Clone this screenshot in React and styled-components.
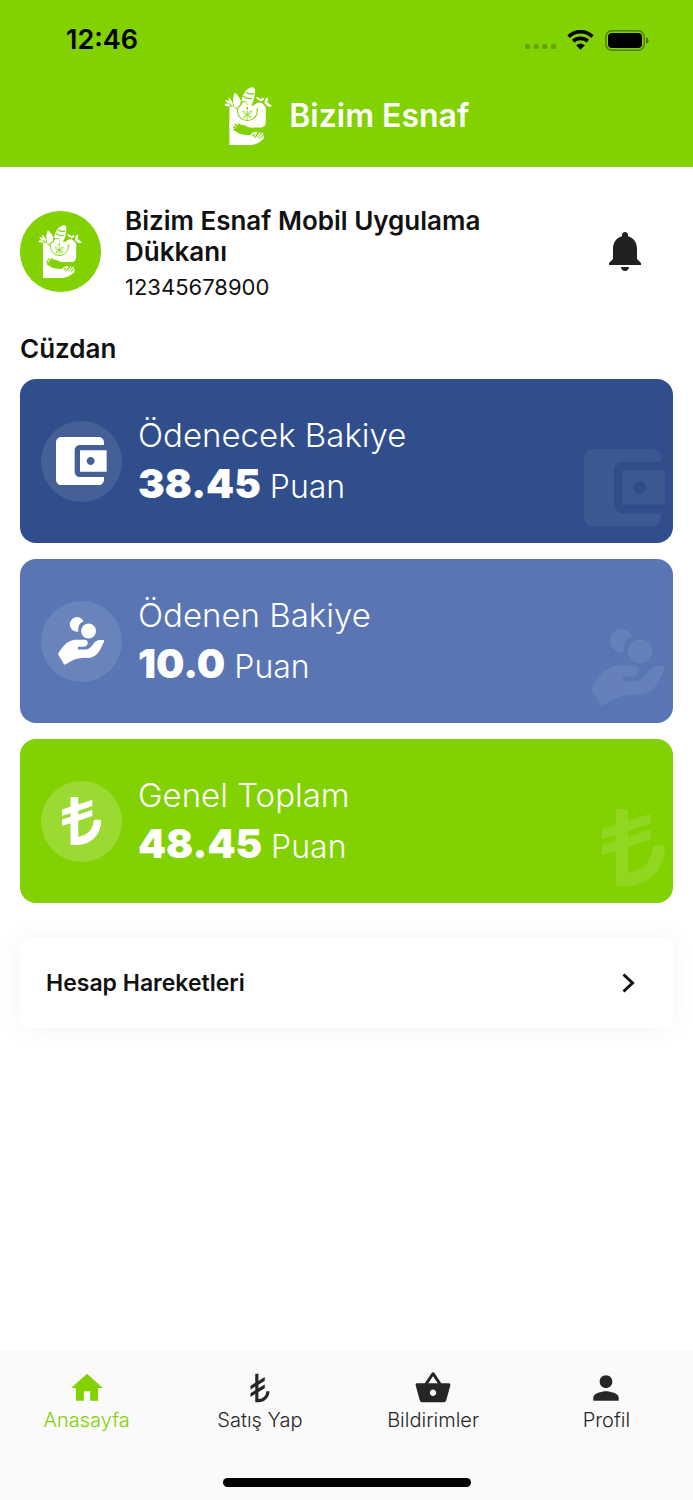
import React from "react";
import styled, { createGlobalStyle, css } from "styled-components";

const GREEN = "#82d100";
const INK = "#111111";

const GlobalStyle = createGlobalStyle`
  * { box-sizing: border-box; }
  body {
    margin: 0;
    background: #ffffff;
    color: ${INK};
    font-family: Inter, "Liberation Sans", sans-serif;
  }
  h1, h2, p { margin: 0; }
`;

const Page = styled.div`
  display: flex;
  flex-direction: column;
  min-height: 100vh;
`;

const Header = styled.header`
  background: ${GREEN};
  color: #ffffff;
  padding-bottom: 22px;
`;

const StatusBar = styled.div`
  display: flex;
  align-items: center;
  justify-content: space-between;
  height: 80px;
  padding: 0 44px 0 66px;
  color: #000000;
`;

const Clock = styled.time`
  font-size: 27px;
  font-weight: 600;
  line-height: 32px;
`;

const StatusIcons = styled.div`
  display: flex;
  align-items: center;
  gap: 11px;
`;

const Brand = styled.div`
  display: flex;
  align-items: center;
  justify-content: center;
  gap: 17px;
  padding-top: 7px;
`;

const BrandName = styled.h1`
  font-size: 32px;
  font-weight: 600;
  line-height: 40px;
`;

const Content = styled.main`
  flex: 1;
  padding: 38px 20px;
`;

const Profile = styled.section`
  display: flex;
  align-items: flex-start;
`;

const Avatar = styled.div`
  display: grid;
  place-items: center;
  flex: none;
  width: 81px;
  height: 81px;
  margin: 6px 24px 0 0;
  border-radius: 50%;
  background: ${GREEN};
  color: #ffffff;
`;

const ProfileText = styled.div`
  flex: 1;
  padding-right: 40px;
`;

const ProfileName = styled.h2`
  font-size: 26px;
  font-weight: 600;
  line-height: 31px;
`;

const ProfileNumber = styled.p`
  margin-top: 6px;
  font-size: 22px;
  line-height: 28px;
`;

const IconButton = styled.button`
  display: flex;
  margin: 22px 24px 0 0;
  padding: 0;
  border: 0;
  background: none;
  color: #212121;
  cursor: pointer;
`;

const SectionTitle = styled.h2`
  margin: 32px 0 14px;
  font-size: 26px;
  font-weight: 600;
  line-height: 32px;
`;

const CardList = styled.div`
  display: flex;
  flex-direction: column;
  gap: 16px;
`;

const Card = styled.article`
  position: relative;
  display: flex;
  align-items: center;
  gap: 16px;
  height: 164px;
  padding: 0 21px;
  border-radius: 16px;
  background: ${(p) => p.$color};
  color: #ffffff;
  overflow: hidden;
`;

const Badge = styled.div`
  display: grid;
  place-items: center;
  flex: none;
  width: 81px;
  height: 81px;
  border-radius: 50%;
  background: rgba(255, 255, 255, ${(p) => p.$tint});
`;

const CardLabel = styled.p`
  font-size: 33px;
  font-weight: 300;
  line-height: 48px;
`;

const CardValue = styled.p`
  font-size: 32px;
  font-weight: 300;
  line-height: 50px;
`;

const Amount = styled.strong`
  font-size: 40px;
  font-weight: 900;
`;

const Watermark = styled.div`
  position: absolute;
  right: 8px;
  bottom: 17px;
  display: flex;
  opacity: ${(p) => p.$opacity};
`;

const RowLink = styled.a`
  display: flex;
  align-items: center;
  justify-content: space-between;
  height: 90px;
  margin-top: 35px;
  padding: 0 38px 0 26px;
  border-radius: 8px;
  background: #ffffff;
  box-shadow: 0 0 24px rgba(0, 0, 0, 0.05);
  color: ${INK};
  font-size: 23px;
  font-weight: 600;
  text-decoration: none;
`;

const BottomBar = styled.footer`
  display: flex;
  flex-direction: column;
  align-items: center;
  justify-content: space-between;
  height: 149px;
  padding: 18px 0 13px;
  background: #fafafa;
  box-shadow: 0 0 3px rgba(0, 0, 0, 0.05);
`;

const Tabs = styled.nav`
  display: grid;
  grid-template-columns: repeat(4, 1fr);
  width: 100%;
`;

const Tab = styled.a`
  display: flex;
  flex-direction: column;
  align-items: center;
  color: #262626;
  font-size: 20px;
  font-weight: 300;
  line-height: 26px;
  text-decoration: none;
  ${(p) => p.$active && css`color: ${GREEN};`}
`;

const HomeIndicator = styled.div`
  width: 248px;
  height: 9px;
  border-radius: 5px;
  background: #000000;
`;

function Glyph({ d, size }) {
  return (
    <svg width={size} height={size} viewBox="0 0 24 24" fill="currentColor" aria-hidden="true">
      <path d={d} />
    </svg>
  );
}

const BELL = "M12 22c1.1 0 2-.9 2-2h-4c0 1.1.89 2 2 2zm6-6v-5c0-3.07-1.64-5.64-4.5-6.32V4c0-.83-.67-1.5-1.5-1.5s-1.5.67-1.5 1.5v.68C7.63 5.36 6 7.92 6 11v5l-2 2v1h16v-1l-2-2z";
const HOME = "M10 20v-6h4v6h5v-8h3L12 3 2 12h3v8z";
const LIRA_THIN = "M9 8.76V3h2v4.51L15 5v2.36l-4 2.51v2.35l4-2.5v2.36l-4 2.5V19c2.76 0 5-2.24 5-5h2c0 3.87-3.13 7-7 7H9v-5.17l-3 1.88v-2.36l3-1.88v-2.36l-3 1.88v-2.36l3-1.87z";
const BASKET = "M17.21 9l-4.38-6.56c-.19-.28-.51-.42-.83-.42-.32 0-.64.14-.83.43L6.79 9H2c-.55 0-1 .45-1 1 0 .09.01.18.04.27l2.54 9.27c.23.84 1 1.46 1.92 1.46h13c.92 0 1.69-.62 1.93-1.46l2.54-9.27L23 10c0-.55-.45-1-1-1h-4.79zM9 9l3-4.4L15 9H9zm3 8c-1.1 0-2-.9-2-2s.9-2 2-2 2 .9 2 2-.9 2-2 2z";
const PERSON = "M12 12c2.21 0 4-1.79 4-4s-1.79-4-4-4-4 1.79-4 4 1.79 4 4 4zm0 2c-2.67 0-8 1.34-8 4v2h16v-2c0-2.66-5.33-4-8-4z";

function WalletIcon({ height }) {
  return (
    <svg height={height} viewBox="3 3 19 18" fill="currentColor" aria-hidden="true">
      <path d="M21 18v1c0 1.1-.9 2-2 2H5c-1.11 0-2-.9-2-2V5c0-1.1.89-2 2-2h14c1.1 0 2 .9 2 2v1h-9c-1.11 0-2 .9-2 2v8c0 1.1.89 2 2 2h9zm-9-2h10V8H12v8zm4-2.5c-.83 0-1.5-.67-1.5-1.5s.67-1.5 1.5-1.5 1.5.67 1.5 1.5-.67 1.5-1.5 1.5z" />
    </svg>
  );
}

function HandIcon({ height }) {
  return (
    <svg height={height} viewBox="92 86 223 231" fill="currentColor" aria-hidden="true">
      <path d="M215 106A35 35 0 1 0 190 156C187 132 194 114 215 106Z" />
      <circle cx="239" cy="153" r="36" />
      <path d="M92 265C104 240 132 199 172 195H220C242 195 240 227 216 229H190Q188 229 188 232V241Q188 243 191 243H218C266 243 254 197 296 197H312Q316 198 314 203C300 231 286 284 234 283C176 280 158 300 125 316Q123 317 121 314Z" />
    </svg>
  );
}

function LiraIcon({ height }) {
  return (
    <svg height={height} viewBox="126 624 189 231" fill="currentColor" aria-hidden="true">
      <path d="M170 624H201Q204 624 204 627V660L270 639Q272 638 272 641V665Q272 668 269 669L204 690V708L270 686Q272 686 272 689V713Q272 716 269 717L204 738V815C246 811 275 781 278 741Q278 733 286 733H307Q315 733 315 742C312 807 264 855 200 855H170Q167 855 167 852V750L129 762Q126 762 126 759V735Q126 732 129 731L167 719V702L129 714Q126 714 126 711V687Q126 684 129 683L167 671V627Q167 624 170 624Z" />
    </svg>
  );
}

function ShopLogo({ height }) {
  return (
    <svg height={height} viewBox="39 20 144 172" fill="none" aria-hidden="true">
      <g fill="currentColor">
        <path d="M55 78H68L72 84Q80 86 88 76L94 66Q106 60 118 68L126 76Q140 60 154 70L163 80V124Q163 141 145 141H55Z" />
        <path d="M55 130H70L84 158L118 160L124 192H55Z" />
        <path d="M69 78C64 62 65 48 71 37C79 42 88 54 89 64Q86 80 74 82Z" />
        <path d="M91 62C94 43 104 25 121 21Q131 20 131 32C130 48 127 62 121 74L108 64Z" />
        <path d="M65 76Q54 72 52 50Q64 60 66 74Z" />
        <path d="M58 76Q44 80 40 73Q48 65 58 74Z" />
        <path d="M43 58Q56 60 57 70Q46 70 43 58Z" />
        <path d="M160 68Q158 54 168 51Q173 60 163 72Z" />
        <path d="M161 67Q170 64 182 77Q168 82 161 70Z" />
        <path d="M133 50Q145 50 149 60Q139 62 133 50Z" />
        <path d="M145 61Q150 50 158 54Q157 61 148 63Z" />
      </g>
      <g stroke={GREEN} strokeLinecap="round">
        <path d="M106 36Q114 43 126 40M98 48Q106 56 120 54" strokeWidth="4" />
        <path d="M94 63Q105 62 109 72M121 76Q121 69 127 66M91 65Q88 79 78 81" strokeWidth="2" />
        <path d="M79 88C79 130 138 130 138 88" strokeWidth="3" />
        <path d="M108 83V119M107 98Q98 87 94 92Q96 101 107 101Q97 104 97 111Q105 111 108 101Q112 112 119 111Q119 104 109 101Q120 100 122 92Q117 89 109 99" strokeWidth="2" />
      </g>
      <circle cx="79" cy="87" r="3" fill={GREEN} />
      <circle cx="138" cy="87" r="3" fill={GREEN} />
      <circle cx="108" cy="82" r="3" fill={GREEN} />
      <path d="M80 134C98 126 108 141 122 141H146L128 164L112 162C96 164 80 158 72 148Z" fill={GREEN} />
      <path d="M82 130L94 139M73 131L86 144M68 138L83 149M69 146L86 154" stroke={GREEN} strokeWidth="5" strokeLinecap="round" />
      <path d="M96 163Q112 169 122 163Q128 172 142 172L150 177Q140 192 112 192H90Z" fill="currentColor" />
      <path d="M118 164Q127 154 136 155L129 166M133 173L146 156M138 176L154 157M143 178L157 165M145 180L156 172" stroke="currentColor" strokeWidth="4" strokeLinecap="round" strokeLinejoin="round" />
    </svg>
  );
}

function SignalDots() {
  return (
    <svg width="31" height="20" viewBox="0 0 31 20" fill="#000000" fillOpacity="0.22" aria-hidden="true">
      <rect y="14" width="5" height="5" rx="1.5" />
      <rect x="8.7" y="14" width="5" height="5" rx="1.5" />
      <rect x="17.3" y="14" width="5" height="5" rx="1.5" />
      <rect x="26" y="14" width="5" height="5" rx="1.5" />
    </svg>
  );
}

function WifiIcon() {
  return (
    <svg width="27" height="20" viewBox="0 0 27 20" fill="none" aria-hidden="true">
      <path d="M1.6 6.6C8.3.2 18.7.2 25.4 6.6M6.2 11.2C10.4 7.4 16.6 7.4 20.8 11.2" stroke="#000000" strokeWidth="3.6" />
      <path d="M9.2 15.2Q13.5 11.8 17.8 15.2L13.5 19.7Z" fill="#000000" />
    </svg>
  );
}

function BatteryIcon() {
  return (
    <svg width="44" height="21" viewBox="0 0 44 21" fill="none" aria-hidden="true">
      <rect x="0.8" y="0.8" width="38.4" height="19.4" rx="6" stroke="#000000" strokeOpacity="0.4" strokeWidth="1.5" />
      <rect x="3" y="3" width="34" height="15" rx="4" fill="#000000" />
      <path d="M41 7.3Q43.6 8.3 43.6 10.5T41 13.7Z" fill="#000000" fillOpacity="0.45" />
    </svg>
  );
}

function Chevron() {
  return (
    <svg width="13" height="20" viewBox="0 0 13 20" fill="none" aria-hidden="true">
      <path d="M1.5 1.5L10.5 10L1.5 18.5" stroke="currentColor" strokeWidth="3" />
    </svg>
  );
}

const balances = [
  { label: "Ödenecek Bakiye", amount: "38.45", color: "#304e8b", tint: 0.1, ghost: 0.06, Icon: WalletIcon },
  { label: "Ödenen Bakiye", amount: "10.0", color: "#5975b4", tint: 0.1, ghost: 0.08, Icon: HandIcon },
  { label: "Genel Toplam", amount: "48.45", color: GREEN, tint: 0.2, ghost: 0.12, Icon: LiraIcon },
];

const tabs = [
  { label: "Anasayfa", d: HOME, active: true },
  { label: "Satış Yap", d: LIRA_THIN },
  { label: "Bildirimler", d: BASKET },
  { label: "Profil", d: PERSON },
];

export default function App() {
  return (
    <Page>
      <GlobalStyle />
      <Header>
        <StatusBar>
          <Clock>12:46</Clock>
          <StatusIcons>
            <SignalDots />
            <WifiIcon />
            <BatteryIcon />
          </StatusIcons>
        </StatusBar>
        <Brand>
          <ShopLogo height={58} />
          <BrandName>Bizim Esnaf</BrandName>
        </Brand>
      </Header>
      <Content>
        <Profile>
          <Avatar>
            <ShopLogo height={53} />
          </Avatar>
          <ProfileText>
            <ProfileName>Bizim Esnaf Mobil Uygulama Dükkanı</ProfileName>
            <ProfileNumber>12345678900</ProfileNumber>
          </ProfileText>
          <IconButton type="button" aria-label="Bildirimler">
            <Glyph d={BELL} size={48} />
          </IconButton>
        </Profile>
        <SectionTitle>Cüzdan</SectionTitle>
        <CardList>
          {balances.map(({ label, amount, color, tint, ghost, Icon }) => (
            <Card key={label} $color={color}>
              <Badge $tint={tint}>
                <Icon height={48} />
              </Badge>
              <div>
                <CardLabel>{label}</CardLabel>
                <CardValue>
                  <Amount>{amount}</Amount> Puan
                </CardValue>
              </div>
              <Watermark $opacity={ghost}>
                <Icon height={77} />
              </Watermark>
            </Card>
          ))}
        </CardList>
        <RowLink href="#hareketler">
          Hesap Hareketleri
          <Chevron />
        </RowLink>
      </Content>
      <BottomBar>
        <Tabs>
          {tabs.map(({ label, d, active }) => (
            <Tab key={label} href="#" $active={active}>
              <Glyph d={d} size={38} />
              {label}
            </Tab>
          ))}
        </Tabs>
        <HomeIndicator />
      </BottomBar>
    </Page>
  );
}
